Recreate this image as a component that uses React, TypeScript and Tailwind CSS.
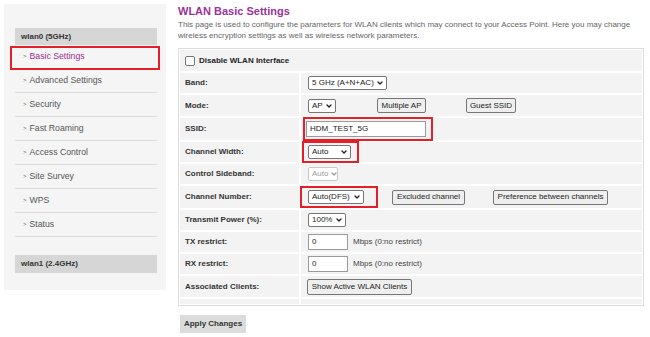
import { ChevronDown } from 'lucide-react';

const menu = [
  'Basic Settings',
  'Advanced Settings',
  'Security',
  'Fast Roaming',
  'Access Control',
  'Site Survey',
  'WPS',
  'Status',
];

const Select = ({ text, w, disabled }: { text: string; w: string; disabled?: boolean }) => (
  <div
    className={`inline-flex h-[14px] items-center justify-between gap-[2px] rounded-[2px] border bg-white pl-[3px] pr-[2px] text-[8px] ${w} ${
      disabled ? 'border-[#c8c8c8] text-[#9a9a9a]' : 'border-[#767676] text-[#222]'
    }`}
  >
    <span>{text}</span>
    <ChevronDown size={8} strokeWidth={4} className={`shrink-0 ${disabled ? 'text-[#9a9a9a]' : 'text-[#222]'}`} />
  </div>
);

const Btn = ({ children, w, h = 'h-[15px]' }: { children: string; w: string; h?: string }) => (
  <div
    className={`inline-flex ${h} ${w} items-center justify-center rounded-[2px] border border-[#767676] bg-[#efefef] text-[8px] text-[#222]`}
  >
    {children}
  </div>
);

const Input = ({ value, w }: { value: string; w: string }) => (
  <div className={`flex h-[16px] ${w} items-center border border-[#9a9a9a] bg-white pl-[3px] text-[8px] text-[#222]`}>
    {value}
  </div>
);

const Row = ({ label, h, children }: { label: string; h: string; children?: React.ReactNode }) => (
  <div className={`flex ${h} gap-[2px]`}>
    <div className="flex w-[119px] items-center bg-[#f3f3f3] pl-[5px] text-[8px] font-bold text-[#333]">{label}</div>
    <div className="flex flex-1 items-center bg-[#f3f3f3] pl-[7px] text-[8px] text-[#444]">{children}</div>
  </div>
);

export default function App() {
  return (
    <div className="flex h-[337px] w-[650px] bg-white font-['Liberation_Sans',Arial,sans-serif]">
      {/* Sidebar */}
      <div className="ml-[4px] mt-[4px] h-[286px] w-[162px] bg-[#f5f5f5] pl-[11px] pr-[9px] pt-[24px]">
        <div className="flex h-[17px] items-center bg-[#d6d6d6] pl-[6px] text-[8px] font-bold text-[#333]">wlan0 (5GHz)</div>
        {menu.map((m, i) => (
          <div key={m} className="relative flex h-[24px] items-center border-b border-[#dedede] pl-[8px] text-[8.7px] text-[#555]">
            <span className="mr-[3px] text-[6px] text-[#666]">&gt;</span>
            <span className={i === 0 ? 'text-[#9b2f94]' : ''}>{m}</span>
            {i === 0 && (
              <div className="absolute -left-[5px] -right-[3px] top-[1px] -bottom-[2px] border-2 border-[#e32028]" />
            )}
          </div>
        ))}
        <div className="mt-[18px] flex h-[18px] items-center bg-[#d6d6d6] pl-[6px] text-[8px] font-bold text-[#333]">wlan1 (2.4GHz)</div>
      </div>

      {/* Main */}
      <div className="ml-[12px] w-[466px]">
        <h1 className="mt-[5px] text-[11px] leading-[13px] font-bold text-[#993399]">WLAN Basic Settings</h1>
        <p className="mt-[2px] text-[8px] leading-[10.5px] text-[#666]">
          This page is used to configure the parameters for WLAN clients which may connect to your Access Point. Here you may change
          <br />
          wireless encryption settings as well as wireless network parameters.
        </p>

        <div className="mt-[7px] flex flex-col gap-[2px] border border-[#dddddd] bg-white p-[1px]">
          <div className="flex h-[21px] items-center gap-[4px] bg-[#f3f3f3] pl-[5px] text-[8px] font-bold text-[#222]">
            <div className="h-[10px] w-[10px] rounded-[2px] border border-[#767676] bg-white" />
            Disable WLAN Interface
          </div>
          <Row label="Band:" h="h-[20px]">
            <Select text="5 GHz (A+N+AC)" w="w-[79px]" />
          </Row>
          <Row label="Mode:" h="h-[21px]">
            <Select text="AP" w="w-[28px]" />
            <div className="ml-[41px]">
              <Btn w="w-[49px]">Multiple AP</Btn>
            </div>
            <div className="ml-[40px]">
              <Btn w="w-[50px]">Guest SSID</Btn>
            </div>
          </Row>
          <Row label="SSID:" h="h-[22px]">
            <div className="-ml-[5px] flex border-2 border-[#e32028] pl-[1px] pr-[5px] py-[2px]">
              <Input value="HDM_TEST_5G" w="w-[120px]" />
            </div>
          </Row>
          <Row label="Channel Width:" h="h-[20px]">
            <div className="-ml-[6px] flex border-2 border-[#e32028] pl-[4px] pr-[6px] py-[2px]">
              <Select text="Auto" w="w-[43px]" />
            </div>
          </Row>
          <Row label="Control Sideband:" h="h-[20px]">
            <Select text="Auto" w="w-[30px]" disabled />
          </Row>
          <Row label="Channel Number:" h="h-[22px]">
            <div className="-ml-[8px] flex border-2 border-[#e32028] pl-[6px] pr-[12px] py-[2px]">
              <Select text="Auto(DFS)" w="w-[56px]" />
            </div>
            <div className="ml-[14px]">
              <Btn w="w-[73px]">Excluded channel</Btn>
            </div>
            <div className="ml-[28px]">
              <Btn w="w-[115px]">Preference between channels</Btn>
            </div>
          </Row>
          <Row label="Transmit Power (%):" h="h-[20px]">
            <Select text="100%" w="w-[38px]" />
          </Row>
          <Row label="TX restrict:" h="h-[20px]">
            <Input value="0" w="w-[40px]" />
            <span className="ml-[5px]">Mbps (0:no restrict)</span>
          </Row>
          <Row label="RX restrict:" h="h-[20px]">
            <Input value="0" w="w-[40px]" />
            <span className="ml-[5px]">Mbps (0:no restrict)</span>
          </Row>
          <Row label="Associated Clients:" h="h-[21px]">
            <div className="-ml-[1px]">
              <Btn w="w-[105px]" h="h-[16px]">Show Active WLAN Clients</Btn>
            </div>
          </Row>
          <div className="flex h-[5px] gap-[2px]">
            <div className="w-[119px] bg-[#f3f3f3]" />
            <div className="flex-1 bg-[#f3f3f3]" />
          </div>
        </div>

        <div className="ml-[2px] mt-[9px] flex h-[18px] w-[66px] items-center justify-center bg-[#dcdcdc] text-[8px] font-bold text-[#333]">
          Apply Changes
        </div>
      </div>
    </div>
  );
}
